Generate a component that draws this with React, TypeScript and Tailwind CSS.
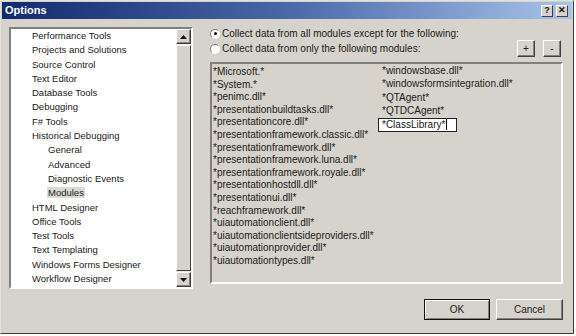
import React from "react";

const treeItems = [
	{ label: "Performance Tools", level: 0 },
	{ label: "Projects and Solutions", level: 0 },
	{ label: "Source Control", level: 0 },
	{ label: "Text Editor", level: 0 },
	{ label: "Database Tools", level: 0 },
	{ label: "Debugging", level: 0 },
	{ label: "F# Tools", level: 0 },
	{ label: "Historical Debugging", level: 0 },
	{ label: "General", level: 1 },
	{ label: "Advanced", level: 1 },
	{ label: "Diagnostic Events", level: 1 },
	{ label: "Modules", level: 1, selected: true },
	{ label: "HTML Designer", level: 0 },
	{ label: "Office Tools", level: 0 },
	{ label: "Test Tools", level: 0 },
	{ label: "Text Templating", level: 0 },
	{ label: "Windows Forms Designer", level: 0 },
	{ label: "Workflow Designer", level: 0 },
];

const leftModules = [
	"*Microsoft.*",
	"*System.*",
	"*penimc.dll*",
	"*presentationbuildtasks.dll*",
	"*presentationcore.dll*",
	"*presentationframework.classic.dll*",
	"*presentationframework.dll*",
	"*presentationframework.luna.dll*",
	"*presentationframework.royale.dll*",
	"*presentationhostdll.dll*",
	"*presentationui.dll*",
	"*reachframework.dll*",
	"*uiautomationclient.dll*",
	"*uiautomationclientsideproviders.dll*",
	"*uiautomationprovider.dll*",
	"*uiautomationtypes.dll*",
];

const rightModules = [
	"*windowsbase.dll*",
	"*windowsformsintegration.dll*",
	"*QTAgent*",
	"*QTDCAgent*",
];

const Radio = ({ checked }: { checked?: boolean }) => (
	<span className="relative inline-block h-[10px] w-[10px] shrink-0 rounded-full border border-t-[#808080] border-l-[#808080] border-b-white border-r-white bg-white">
		{checked && (
			<span className="absolute left-[2.5px] top-[2.5px] h-[3px] w-[3px] rounded-full bg-[#111]" />
		)}
	</span>
);

const SmallButton = ({ label }: { label: string }) => (
	<div className="flex h-[17px] w-[18px] items-center justify-center border border-t-white border-l-white border-b-[#404040] border-r-[#404040] bg-[#d6d3cc] text-[10px] leading-none text-[#222] shadow-[inset_-1px_-1px_0_#808080]">
		{label}
	</div>
);

const Arrow = ({ up }: { up?: boolean }) => (
	<div className="flex h-[15px] w-[15px] items-center justify-center border border-t-white border-l-white border-b-[#404040] border-r-[#404040] bg-[#d6d3cc] shadow-[inset_-1px_-1px_0_#808080]">
		<svg width="7" height="4" viewBox="0 0 7 4">
			<path d={up ? "M0 4 L3.5 0 L7 4 Z" : "M0 0 L3.5 4 L7 0 Z"} fill="#111" />
		</svg>
	</div>
);

export default function App() {
	return (
		<div
			className="h-[336px] w-[576px] bg-white"
			style={{ fontFamily: '"Liberation Sans", Arial, sans-serif' }}
		>
			<div className="flex h-[334px] w-[574px] flex-col border border-t-[#e4e2dc] border-l-[#e4e2dc] border-b-[#404040] border-r-[#404040] bg-[#d6d3cc] p-[1px]">
				{/* title bar */}
				<div className="flex h-[17px] items-center justify-between bg-gradient-to-r from-[#13296e] via-[#4a68a8] to-[#a9c4ea] pl-[3px] pr-[4px]">
					<span className="text-[11px] font-bold text-white">Options</span>
					<div className="flex gap-[3px]">
						<div className="flex h-[12px] w-[12px] items-center justify-center border border-t-white border-l-white border-b-[#404040] border-r-[#404040] bg-[#d6d3cc] text-[9px] font-bold leading-none text-[#111]">
							?
						</div>
						<div className="flex h-[12px] w-[12px] items-center justify-center border border-t-white border-l-white border-b-[#404040] border-r-[#404040] bg-[#d6d3cc] text-[9px] font-bold leading-none text-[#111]">
							✕
						</div>
					</div>
				</div>

				<div className="flex pl-[7px] pr-[9px] pt-[8px]">
					{/* tree */}
					<div className="flex h-[262px] w-[184px] border-2 border-t-[#808080] border-l-[#808080] border-b-white border-r-white bg-white">
						<div className="flex-1 pl-[21px] text-[9.5px] leading-[14.3px] text-[#1a1a1a]">
							{treeItems.map((item) => (
								<div key={item.label} className={item.level === 1 ? "pl-[16px]" : ""}>
									<span className={item.selected ? "bg-[#dcdad4] px-[1px] -ml-[1px]" : ""}>
										{item.label}
									</span>
								</div>
							))}
						</div>
						<div className="flex w-[15px] flex-col bg-[#ebe9e4]">
							<Arrow up />
							<div className="my-[1px] flex-1 border border-t-white border-l-white border-b-[#404040] border-r-[#404040] bg-[#d6d3cc]" />
							<Arrow />
						</div>
					</div>

					{/* right side */}
					<div className="ml-[17px] flex flex-1 flex-col text-[10px] text-[#1a1a1a]">
						<div className="flex h-[13px] items-center gap-[2px]">
							<Radio checked />
							<span>Collect data from all modules except for the following:</span>
						</div>
						<div className="flex h-[21px] items-start justify-between">
							<div className="mt-[2px] flex h-[13px] items-center gap-[2px]">
								<Radio />
								<span>Collect data from only the following modules:</span>
							</div>
							<div className="flex gap-[8px] pr-[2px]">
								<SmallButton label="+" />
								<SmallButton label="-" />
							</div>
						</div>
						<div className="mt-[1px] flex h-[222px] border-2 border-t-[#808080] border-l-[#808080] border-b-white border-r-white bg-[#d6d3cc] pl-[1px]">
							<div className="w-[169px] pt-[2px] leading-[12.6px]">
								{leftModules.map((m) => (
									<div key={m}>{m}</div>
								))}
							</div>
							<div className="leading-[13.4px]">
								{rightModules.map((m) => (
									<div key={m}>{m}</div>
								))}
								<div className="-ml-[4px] flex h-[14px] w-[79px] items-center border border-[#222] bg-white pl-[3px]">
									*ClassLibrary*
									<span className="ml-[1px] h-[11px] w-[1px] bg-black" />
								</div>
							</div>
						</div>
					</div>
				</div>

				<div className="mt-[10px] flex justify-end gap-[6px] pr-[9px]">
					<div className="flex h-[21px] w-[66px] items-center justify-center border border-[#111] bg-[#d6d3cc] text-[10px] text-[#1a1a1a] shadow-[inset_1px_1px_0_#fff,inset_-1px_-1px_0_#808080]">
						OK
					</div>
					<div className="flex h-[21px] w-[67px] items-center justify-center border border-t-white border-l-white border-b-[#404040] border-r-[#404040] bg-[#d6d3cc] text-[10px] text-[#1a1a1a] shadow-[inset_-1px_-1px_0_#808080]">
						Cancel
					</div>
				</div>
			</div>
		</div>
	);
}
